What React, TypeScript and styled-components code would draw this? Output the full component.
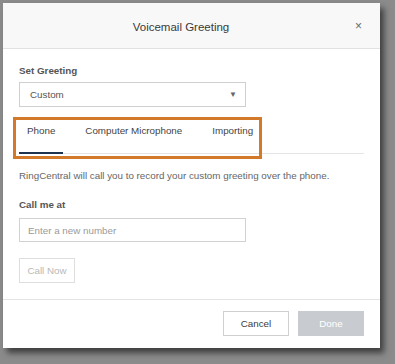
import React from "react";
import styled, { createGlobalStyle } from "styled-components";

const Global = createGlobalStyle`
  html, body { margin: 0; padding: 0; background: #8b8b8b; }
  body { font-family: "Liberation Sans", Arial, sans-serif; }
  * { box-sizing: border-box; }
`;

const Stage = styled.div`
  width: 395px;
  height: 364px;
  padding: 3px 0 0 3px;
  background: #8b8b8b;
  overflow: hidden;
`;

const Dialog = styled.div`
  position: relative;
  width: 377px;
  height: 345px;
  background: #fff;
  box-shadow: 4px 5px 6px rgba(0, 0, 0, 0.55);
  display: flex;
  flex-direction: column;
`;

const Header = styled.div`
  height: 46px;
  display: grid;
  grid-template-columns: 1fr auto 1fr;
  align-items: center;
  background: #f8f8f8;
  border-bottom: 1px solid #e2e2e2;
  padding: 0 18px 0 0;
`;

const Title = styled.div`
  grid-column: 2;
  font-size: 11.5px;
  color: #3a3a3a;
  padding: 2px 3px 0 0;
`;

const Close = styled.button`
  grid-column: 3;
  justify-self: end;
  border: none;
  background: none;
  padding: 0;
  font-family: "Liberation Sans", Arial, sans-serif;
  font-size: 12px;
  color: #6a6a6a;
  line-height: 1;
  margin-top: 1px;
`;

const Body = styled.div`
  padding: 15px 16px 16px 16px;
  display: flex;
  flex-direction: column;
  border-bottom: 1px solid #e4e4e4;
`;

const Label = styled.div<{ $gap: number }>`
  font-size: 9.8px;
  line-height: 14px;
  font-weight: bold;
  color: #555;
  margin-bottom: ${(p) => p.$gap}px;
`;

const Select = styled.div`
  width: 227px;
  height: 25px;
  border: 1px solid #cfcfcf;
  display: flex;
  align-items: center;
  justify-content: space-between;
  padding: 0 8px 0 10px;
  font-size: 9.8px;
  color: #555;
`;

const Caret = styled.span`
  font-size: 8px;
  color: #666;
`;

const TabList = styled.div`
  margin-top: 10px;
  display: flex;
  gap: 14px;
  border-bottom: 1px solid #e6e6e6;
`;

const Tab = styled.div<{ $active?: boolean }>`
  padding: 7px 8px 14px 8px;
  font-size: 9.8px;
  line-height: 14px;
  color: #444;
  border-bottom: 2px solid ${(p) => (p.$active ? "#1e3350" : "transparent")};
  margin-bottom: -1px;
`;

const Highlight = styled.div`
  position: absolute;
  left: 10px;
  top: 114px;
  width: 249px;
  height: 42px;
  border: 3px solid #d27a2a;
  pointer-events: none;
`;

const Description = styled.div`
  margin-top: 15px;
  font-size: 9.8px;
  line-height: 14px;
  color: #666;
`;

const Section = styled.div`
  margin-top: 15px;
  display: flex;
  flex-direction: column;
`;

const Input = styled.div`
  width: 227px;
  height: 24px;
  border: 1px solid #d2d2d2;
  display: flex;
  align-items: center;
  padding-left: 8px;
  font-size: 9.8px;
  color: #9a9a9a;
`;

const Button = styled.button<{ $variant: "ghost" | "outline" | "disabled" }>`
  height: 25px;
  font-family: "Liberation Sans", Arial, sans-serif;
  font-size: 9.8px;
  padding: 0;
  border: 1px solid
    ${(p) => (p.$variant === "disabled" ? "#c8ccd0" : p.$variant === "ghost" ? "#dedede" : "#cfcfcf")};
  background: ${(p) => (p.$variant === "disabled" ? "#c8ccd0" : "#fff")};
  color: ${(p) => (p.$variant === "disabled" ? "#fff" : p.$variant === "ghost" ? "#b8b8b8" : "#3a3a3a")};
`;

const CallNow = styled(Button)`
  margin-top: 16px;
  width: 56px;
  align-self: flex-start;
`;

const Footer = styled.div`
  flex: 1;
  display: flex;
  justify-content: flex-end;
  align-items: flex-start;
  gap: 9px;
  padding: 11px 16px 0 0;
`;

const FooterButton = styled(Button)`
  width: 66px;
`;

export default function App() {
  return (
    <Stage>
      <Global />
      <Dialog>
        <Header>
          <Title>Voicemail Greeting</Title>
          <Close aria-label="Close">×</Close>
        </Header>
        <Body>
          <Label $gap={4}>Set Greeting</Label>
          <Select>
            <span>Custom</span>
            <Caret>▼</Caret>
          </Select>
          <TabList>
            <Tab $active>Phone</Tab>
            <Tab>Computer Microphone</Tab>
            <Tab>Importing</Tab>
          </TabList>
          <Description>
            RingCentral will call you to record your custom greeting over the phone.
          </Description>
          <Section>
            <Label $gap={6}>Call me at</Label>
            <Input>Enter a new number</Input>
          </Section>
          <CallNow $variant="ghost">Call Now</CallNow>
        </Body>
        <Footer>
          <FooterButton $variant="outline">Cancel</FooterButton>
          <FooterButton $variant="disabled">Done</FooterButton>
        </Footer>
        <Highlight />
      </Dialog>
    </Stage>
  );
}
